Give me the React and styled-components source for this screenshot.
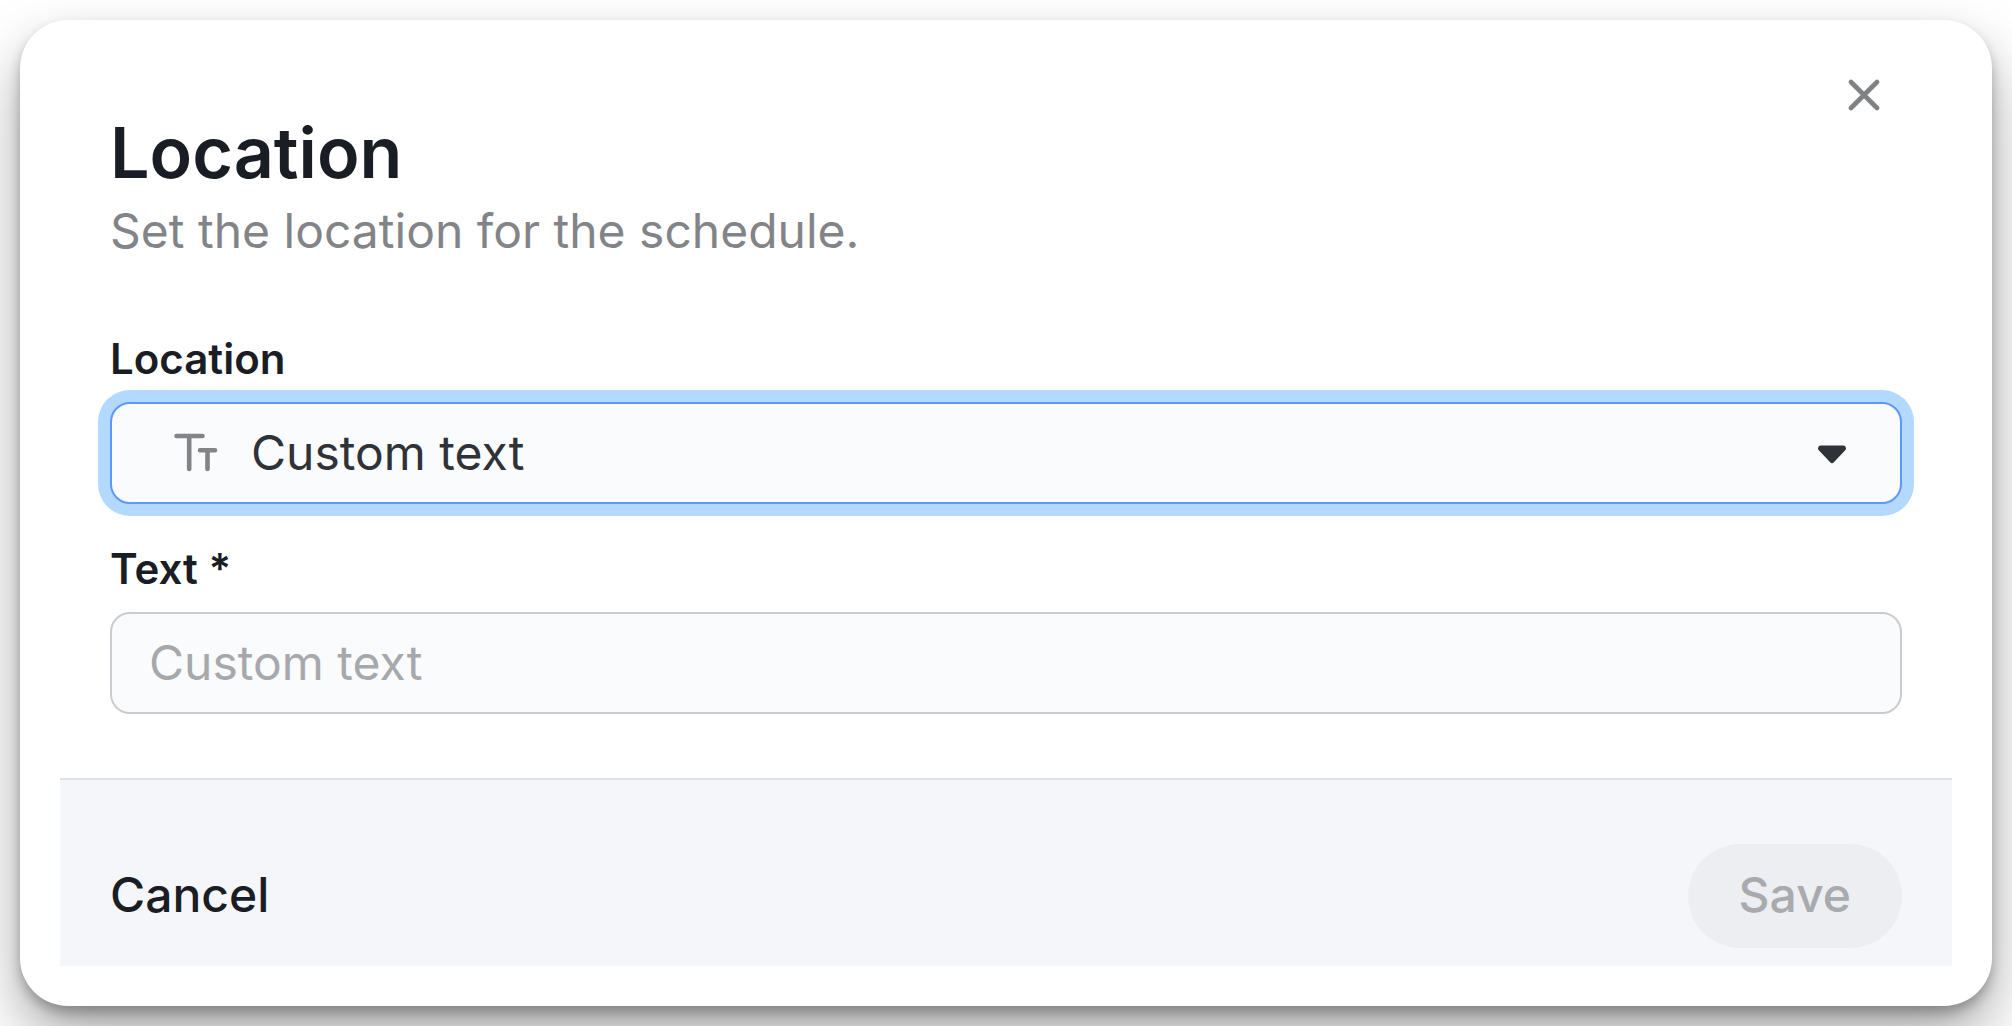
import React, { useState } from "react";
import styled, { createGlobalStyle } from "styled-components";

const GlobalStyle = createGlobalStyle`
  *, *::before, *::after { box-sizing: border-box; }
  body {
    margin: 0;
    background: #fff;
    font-family: Inter, "Liberation Sans", sans-serif;
    color: #1a1d24;
  }
  button, input, select { font: inherit; color: inherit; }
`;

const Page = styled.main`
  min-height: 100vh;
  padding: 20px;
  overflow: hidden;
`;

const Dialog = styled.form`
  padding: 40px;
  border-radius: 48px;
  background: #fff;
  box-shadow:
    0 7px 12px rgba(0, 0, 0, 0.25),
    0 30px 60px rgba(0, 0, 0, 0.35);
`;

const Header = styled.header`
  display: flex;
  justify-content: space-between;
  align-items: flex-start;
  padding: 0 50px;
`;

const Heading = styled.div`
  display: flex;
  flex-direction: column;
  gap: 4px;
  padding-top: 49px;
`;

const Title = styled.h1`
  margin: 0;
  font-size: 70px;
  line-height: 88px;
  font-weight: 600;
`;

const Subtitle = styled.p`
  margin: 0;
  font-size: 48px;
  line-height: 60px;
  color: #828487;
`;

const CloseButton = styled.button`
  display: flex;
  align-items: center;
  justify-content: center;
  width: 76px;
  height: 70px;
  padding: 0;
  border: 0;
  background: none;
  color: #7f8184;
  cursor: pointer;
`;

const Fields = styled.div`
  display: flex;
  flex-direction: column;
  gap: 42px;
  padding: 75px 50px 64px;
`;

const Field = styled.div`
  display: flex;
  flex-direction: column;
  gap: 20px;
`;

const Label = styled.label`
  font-size: 42px;
  line-height: 46px;
  font-weight: 600;
`;

const Control = styled.input`
  width: 100%;
  height: 102px;
  margin: 0;
  padding: 0 37px 2px;
  border: 2px solid ${(p) => (p.$active ? "#5c98ff" : "#cbcccf")};
  border-radius: 20px;
  outline: none;
  background: #fafbfd;
  box-shadow: ${(p) => (p.$active ? "0 0 0 12px #b3d9ff" : "none")};
  font-size: 48px;
  color: #2f3237;

  &::placeholder {
    color: #a6a8ab;
    opacity: 1;
  }
`;

const SelectControl = styled(Control)`
  grid-area: 1 / 1;
  appearance: none;
  padding-left: 139px;
`;

const SelectBox = styled.div`
  display: grid;
  align-items: center;

  svg {
    grid-area: 1 / 1;
    z-index: 1;
    pointer-events: none;
  }
`;

const TypeIcon = styled.svg`
  margin-left: 64px;
  color: #828487;
`;

const Caret = styled.svg`
  justify-self: end;
  margin-right: 56px;
  color: #2f3237;
`;

const Footer = styled.footer`
  display: flex;
  justify-content: space-between;
  align-items: center;
  padding: 64px 50px 18px;
  border-top: 2px solid #dfe0e4;
  background: #f5f6fa;
`;

const Button = styled.button`
  height: 104px;
  padding: 0 ${(p) => (p.$filled ? 51 : 0)}px 3px;
  border: 0;
  border-radius: 52px;
  background: ${(p) => (p.$filled ? "#edeef2" : "none")};
  font-size: 48px;
  font-weight: 500;
  color: #1a1d24;

  &:disabled { color: #a8aaad; }
`;

export default function App() {
  const [location, setLocation] = useState("custom");
  const [text, setText] = useState("");

  return (
    <>
      <GlobalStyle />
      <Page>
        <Dialog aria-labelledby="dialog-title" onSubmit={(e) => e.preventDefault()}>
          <Header>
            <Heading>
              <Title id="dialog-title">Location</Title>
              <Subtitle>Set the location for the schedule.</Subtitle>
            </Heading>
            <CloseButton type="button" aria-label="Close">
              <svg width="32" height="32" viewBox="0 0 32 32" fill="none" stroke="currentColor" strokeWidth="4.6" strokeLinecap="round" aria-hidden="true">
                <path d="M3 3 29 29M29 3 3 29" />
              </svg>
            </CloseButton>
          </Header>
          <Fields>
            <Field>
              <Label htmlFor="location">Location</Label>
              <SelectBox>
                <SelectControl
                  as="select"
                  id="location"
                  $active
                  value={location}
                  onChange={(e) => setLocation(e.target.value)}
                >
                  <option value="custom">Custom text</option>
                </SelectControl>
                <TypeIcon width="44" height="40" viewBox="0 0 44 40" fill="none" stroke="currentColor" strokeWidth="4.6" strokeLinecap="round" aria-hidden="true">
                  <path d="M2.5 3H28.5M15.2 3V36M26 17.2H41M33.5 17.2V36" />
                </TypeIcon>
                <Caret width="28" height="22" viewBox="0 0 28 22" fill="currentColor" aria-hidden="true">
                  <path d="M3 3.5H25C27.8 3.5 28.8 6.5 27 8.5L15.6 20.4C14.6 21.4 13.4 21.4 12.4 20.4L1 8.5C-.8 6.5 .2 3.5 3 3.5Z" />
                </Caret>
              </SelectBox>
            </Field>
            <Field>
              <Label htmlFor="custom-text">Text *</Label>
              <Control
                id="custom-text"
                type="text"
                placeholder="Custom text"
                value={text}
                onChange={(e) => setText(e.target.value)}
              />
            </Field>
          </Fields>
          <Footer>
            <Button type="button">Cancel</Button>
            <Button type="submit" $filled disabled={text === ""}>Save</Button>
          </Footer>
        </Dialog>
      </Page>
    </>
  );
}
